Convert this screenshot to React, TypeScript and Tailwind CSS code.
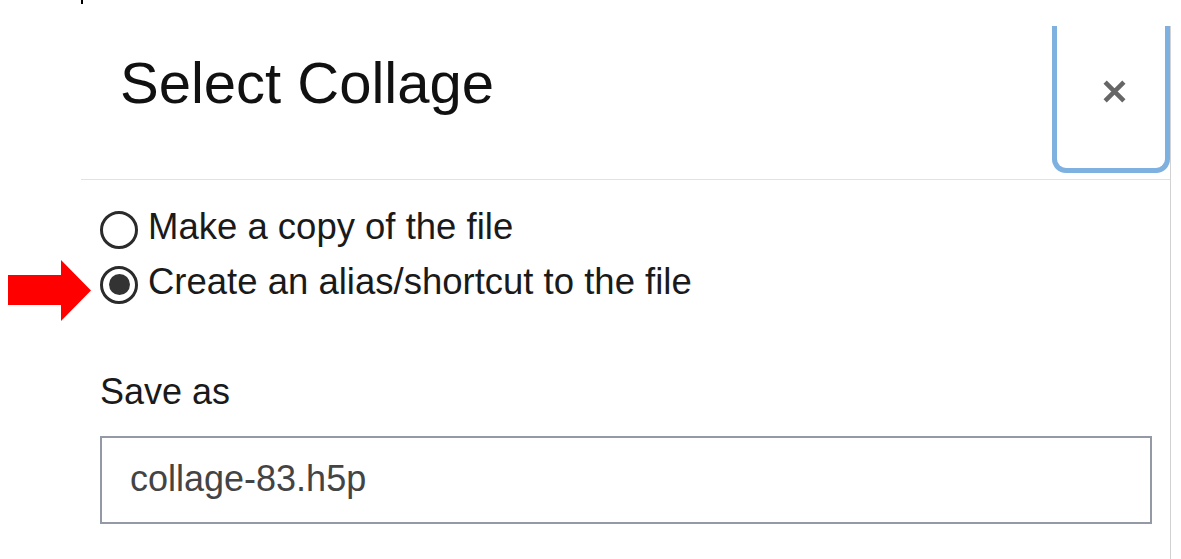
import React from "react";

function Radio({ checked }: { checked?: boolean }) {
  return (
    <div className="w-[38px] h-[38px] rounded-full border-[3px] border-[#2b2b2b] bg-white flex items-center justify-center shrink-0">
      {checked && <div className="w-[21px] h-[21px] rounded-full bg-[#333333]" />}
    </div>
  );
}

export default function App() {
  return (
    <div
      className="relative w-[1181px] h-[559px] bg-white overflow-hidden"
      style={{ fontFamily: '"Liberation Sans", Arial, sans-serif' }}
    >
      {/* small tick at top */}
      <div className="absolute left-[81px] top-0 w-[2px] h-[4px] bg-black" />

      {/* red arrow annotation */}
      <svg className="absolute left-[8px] top-[260px]" width="84" height="62" viewBox="0 0 84 62">
        <polygon points="0,15 53,15 53,0 83,30.5 53,61 53,45 0,45" fill="#ff0000" />
      </svg>

      <div className="ml-[81px] mt-[26px] w-[1090px] h-[533px] border-r border-[#d2d2d2]">
        {/* header */}
        <div className="h-[153px] flex justify-between items-start">
          <div className="pl-[39px] pt-[28px] text-[58px] leading-[58px] text-[#111111]">Select Collage</div>
          <button className="w-[118px] h-[147px] border-[5px] border-t-0 border-[#7eb0e0] rounded-b-[14px] flex items-start justify-start pl-[45px] pt-[53px] bg-white">
            <svg width="25" height="25" viewBox="0 0 24 24">
              <path d="M3 3 L21 21 M21 3 L3 21" stroke="#666666" strokeWidth="4.4" strokeLinecap="butt" />
            </svg>
          </button>
        </div>
        <div className="h-[1px] bg-[#dfe3e8]" />

        {/* body */}
        <div className="pl-[19px] pr-[18px] pt-[22px] text-[36px] text-[#1a1a1a]">
          <div className="flex flex-col">
            <label className="h-[55px] flex items-center gap-[10px]">
              <Radio />
              <span className="leading-[41px] pb-[6px] text-[36.5px]">Make a copy of the file</span>
            </label>
            <label className="h-[55px] flex items-center gap-[10px]">
              <Radio checked />
              <span className="leading-[41px] pb-[6px] text-[36.5px]">Create an alias/shortcut to the file</span>
            </label>
          </div>

          <div className="mt-[59px] leading-[41px]">Save as</div>
          <div className="mt-[24px] w-[1052px] h-[88px] border-2 border-[#949aa5] flex items-center pl-[28px] pb-[4px] text-[#444444]">
            <span className="leading-[41px]">collage-83.h5p</span>
          </div>
        </div>
      </div>
    </div>
  );
}
